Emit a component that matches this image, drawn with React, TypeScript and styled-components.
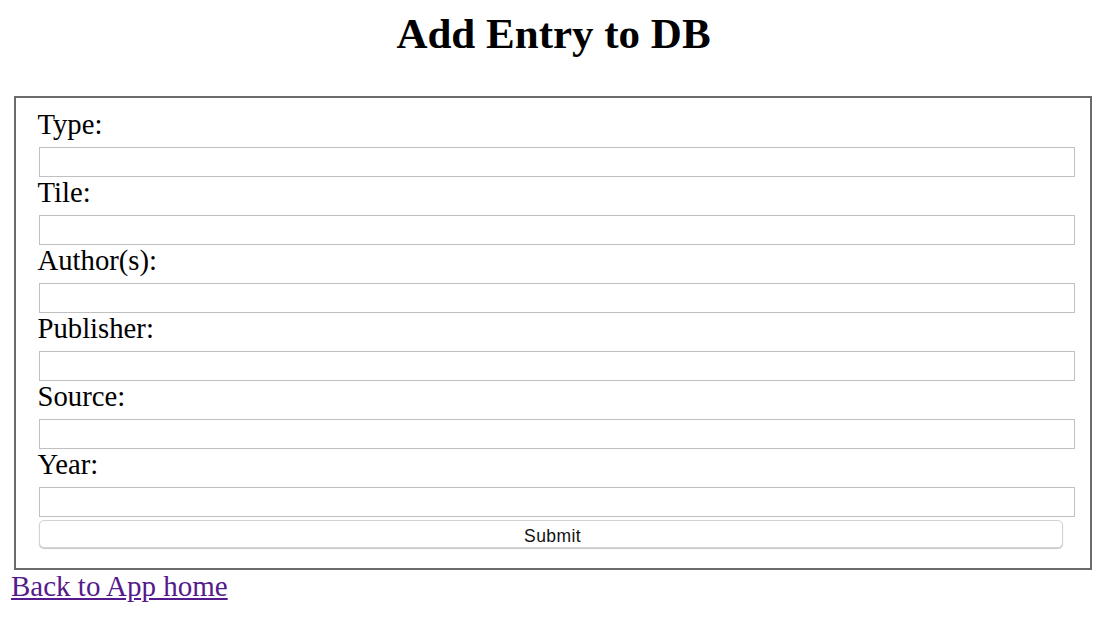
import React from "react";
import styled, { createGlobalStyle } from "styled-components";

const GlobalStyle = createGlobalStyle`
  html, body {
    margin: 0;
    padding: 0;
    background: #ffffff;
  }
  body {
    font-family: "Liberation Serif", "Times New Roman", serif;
    color: #000000;
  }
`;

const Page = styled.div`
  padding: 0 12px 0 10px;
`;

const Title = styled.h1`
  margin: 9px 0 37px;
  padding-left: 5px;
  font-family: "Liberation Serif", "Times New Roman", serif;
  font-size: 43px;
  font-weight: bold;
  line-height: 50px;
  text-align: center;
`;

const Box = styled.fieldset`
  margin: 0 0 0 4px;
  padding: 11px 15px 20px 23px;
  border: 2px solid #6b6b6b;
  min-width: 0;
`;

const Label = styled.label`
  display: block;
  margin: 0 0 7px -1.5px;
  font-size: 28.7px;
  line-height: 31px;
`;

const Input = styled.input`
  display: block;
  box-sizing: border-box;
  width: 100%;
  height: 30px;
  margin: 0;
  padding: 0 4px;
  border: 1px solid #c0c0c0;
  border-radius: 0;
  background: #ffffff;
  font-family: "Liberation Sans", Arial, sans-serif;
  font-size: 16px;
  outline: none;
`;

const SubmitButton = styled.button`
  display: block;
  box-sizing: border-box;
  width: calc(100% - 12px);
  height: 28px;
  margin: 3px 0 0;
  padding: 3px 0 0 3px;
  border: 1px solid #d2d2d2;
  border-radius: 5px;
  background: #ffffff;
  box-shadow: 0 1px 1px rgba(0, 0, 0, 0.22);
  font-family: "Liberation Sans", Arial, sans-serif;
  font-size: 17.5px;
  line-height: 20px;
  letter-spacing: 0.4px;
  color: #111111;
  cursor: pointer;
`;

const HomeLink = styled.a`
  display: inline-block;
  margin-left: 1px;
  font-size: 29px;
  line-height: 33px;
  color: #551a8b;
  text-decoration: underline;
`;

const fields = ["Type:", "Tile:", "Author(s):", "Publisher:", "Source:", "Year:"];

export default function App() {
  return (
    <>
      <GlobalStyle />
      <Page>
        <Title>Add Entry to DB</Title>
        <form onSubmit={(e) => e.preventDefault()}>
          <Box>
            {fields.map((f, i) => (
              <React.Fragment key={f}>
                <Label htmlFor={`field-${i}`}>{f}</Label>
                <Input id={`field-${i}`} type="text" />
              </React.Fragment>
            ))}
            <SubmitButton type="submit">Submit</SubmitButton>
          </Box>
        </form>
        <HomeLink href="#">Back to App home</HomeLink>
      </Page>
    </>
  );
}
